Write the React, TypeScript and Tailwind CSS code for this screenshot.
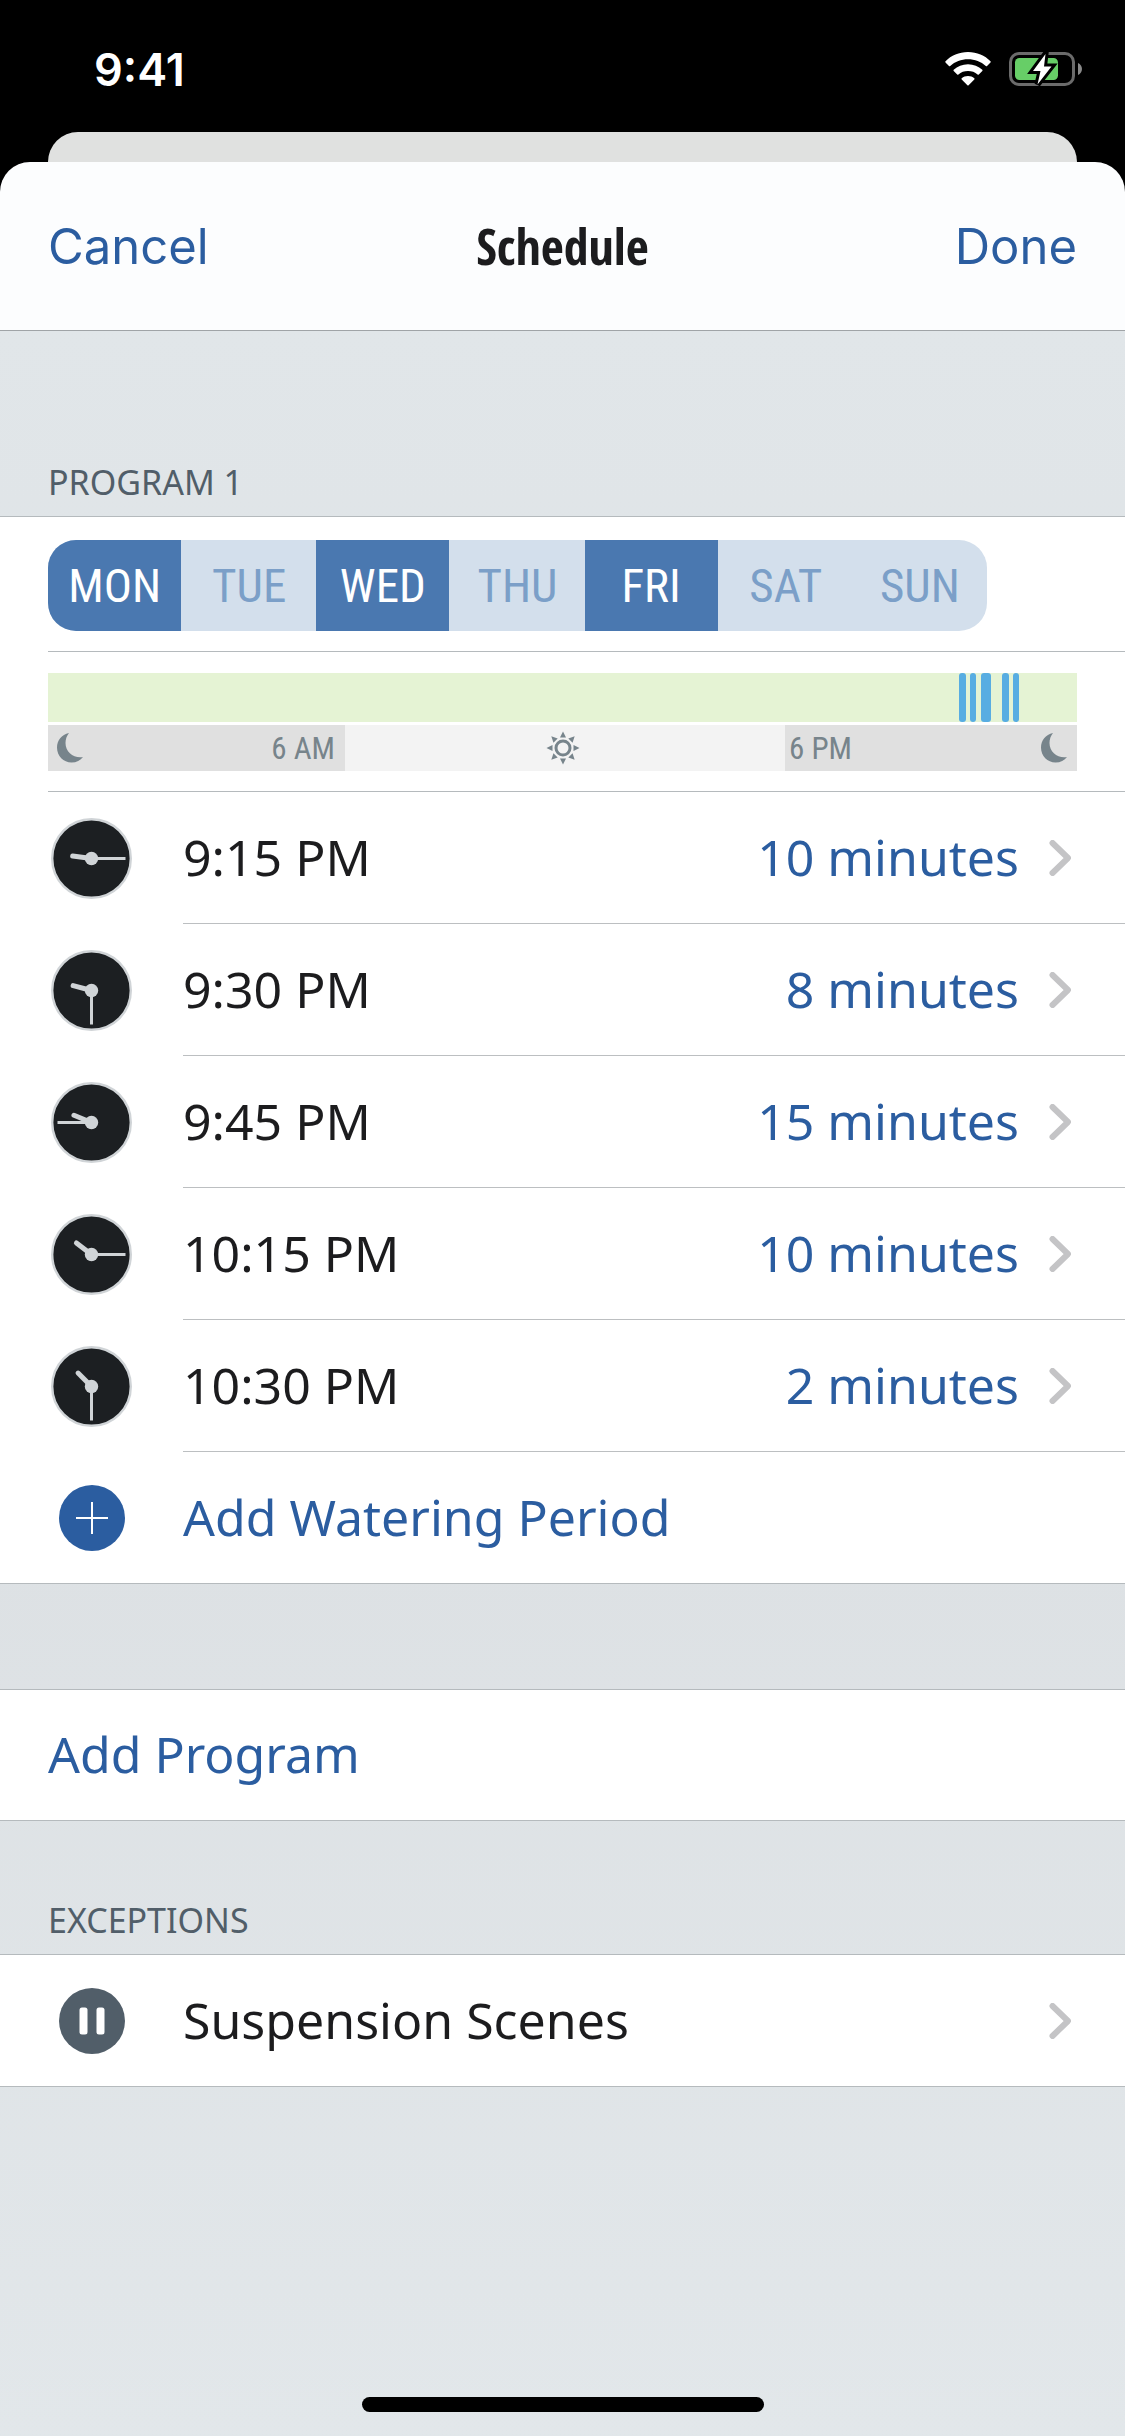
import type { ReactNode } from "react";

const days = [
  { name: "MON", on: true },
  { name: "TUE", on: false },
  { name: "WED", on: true },
  { name: "THU", on: false },
  { name: "FRI", on: true },
  { name: "SAT", on: false },
  { name: "SUN", on: false },
];

const periods = [
  { hour: 21, minute: 15, duration: 10 },
  { hour: 21, minute: 30, duration: 8 },
  { hour: 21, minute: 45, duration: 15 },
  { hour: 22, minute: 15, duration: 10 },
  { hour: 22, minute: 30, duration: 2 },
];

const DAY_MINUTES = 24 * 60;

function WifiIcon() {
  return (
    <svg className="h-[35px] w-[46px]" viewBox="0 0 46 35" fill="#fff" aria-hidden="true">
      <path d="M23 0C32 0 39.800 3.500 45.500 9.200Q46 9.800 45.500 10.400L42 13.900Q41.400 14.400 40.800 13.900C36 9.500 29.800 7.200 23 7.200S10 9.500 5.200 13.900Q4.600 14.400 4 13.900L.5 10.400Q0 9.800.5 9.200C6.200 3.500 14 0 23 0Z" />
      <path d="M23 12.200C28.600 12.200 33.500 14.300 37.300 17.700Q37.900 18.300 37.300 18.900L33.800 22.400Q33.200 22.900 32.600 22.400C30 20.200 26.700 19 23 19S16 20.200 13.400 22.400Q12.800 22.900 12.200 22.400L8.700 18.900Q8.100 18.300 8.700 17.700C12.500 14.300 17.400 12.200 23 12.200Z" />
      <path d="M23 24C25.500 24 27.600 24.900 29.300 26.300Q29.900 26.900 29.300 27.500L23.600 33.200Q23 33.800 22.400 33.200L16.700 27.500Q16.100 26.900 16.700 26.300C18.400 24.900 20.500 24 23 24Z" />
    </svg>
  );
}

function BatteryIcon() {
  return (
    <svg className="h-[36px] w-[74px]" viewBox="0 0 74 36" aria-hidden="true">
      <rect x="1.500" y="2.500" width="63" height="31" rx="8.500" fill="none" stroke="#6b6b6b" strokeWidth="3" />
      <path d="M69 12C71.500 13 73 15.500 73 18S71.500 23 69 24Z" fill="#8a8a8a" />
      <rect x="6" y="7" width="43" height="22" rx="4.500" fill="#67ce67" />
      <path d="M36.500 3 24 20H31.500L28.500 33.500 42.500 15.500H35Z" fill="#fff" stroke="#000" strokeWidth="6" />
      <path d="M36.500 3 24 20H31.500L28.500 33.500 42.500 15.500H35Z" fill="#fff" />
    </svg>
  );
}

function MoonIcon() {
  return (
    <svg className="h-[30px] w-[26px]" viewBox="0 0 26 30" fill="#77848b" aria-hidden="true">
      <path d="M12 0C4.500 1.800 0 7.500 0 14.500C0 23 6.500 29.500 14.500 29.500C19.500 29.500 23.500 27.500 26 24C17 25.500 8.500 19.500 8.500 10C8.500 6 9.800 2.800 12 0Z" />
    </svg>
  );
}

function SunIcon() {
  return (
    <svg className="h-[34px] w-[34px]" viewBox="-17 -17 34 34" fill="#77848b" aria-hidden="true">
      <circle r="7" fill="none" stroke="#77848b" strokeWidth="3" />
      {[0, 45, 90, 135, 180, 225, 270, 315].map((angle) => (
        <path key={angle} d="M-3-10.500H3L0-16.500Z" transform={`rotate(${angle})`} />
      ))}
    </svg>
  );
}

function ClockIcon({ hour, minute }: { hour: number; minute: number }) {
  return (
    <svg className="h-[81px] w-[81px]" viewBox="-40.500 -40.500 81 81" aria-hidden="true">
      <circle r="39.300" fill="#1c1f22" stroke="#d0d4d7" strokeWidth="2.400" />
      <g stroke="#d0d4d7">
        <path d="M0 0V-19" strokeWidth="5" strokeLinecap="round" transform={`rotate(${(hour % 12) * 30 + minute / 2})`} />
        <path d="M0 0V-34" strokeWidth="3" transform={`rotate(${minute * 6})`} />
      </g>
      <circle r="6.700" fill="#d0d4d7" />
    </svg>
  );
}

function PlusIcon() {
  return (
    <svg className="h-[66px] w-[66px]" viewBox="0 0 66 66" aria-hidden="true">
      <circle cx="33" cy="33" r="33" fill="#2b5da0" />
      <path d="M33 17V49M17 33H49" stroke="#fff" strokeWidth="2" />
    </svg>
  );
}

function PauseIcon() {
  return (
    <svg className="h-[66px] w-[66px]" viewBox="0 0 66 66" aria-hidden="true">
      <circle cx="33" cy="33" r="33" fill="#515e69" />
      <rect x="20.500" y="19.500" width="8" height="27" rx="2.500" fill="#fff" />
      <rect x="37.500" y="19.500" width="8" height="27" rx="2.500" fill="#fff" />
    </svg>
  );
}

function Chevron() {
  return (
    <svg className="h-[36px] w-[22px]" viewBox="0 0 22 36" fill="none" aria-hidden="true">
      <path d="M3.500 3 19 18 3.500 33" stroke="#c4c4c6" strokeWidth="6" strokeLinecap="round" strokeLinejoin="round" />
    </svg>
  );
}

function Row({ icon, divider, children }: { icon: ReactNode; divider?: boolean; children: ReactNode }) {
  return (
    <button type="button" className={`flex w-full items-stretch text-left ${divider ? "h-[132px]" : "h-[131px]"}`}>
      <span className="flex w-[183px] shrink-0 items-center pl-12">
        <span className="flex w-[87px] justify-center">{icon}</span>
      </span>
      <span className={`flex flex-1 items-center pr-[54px] ${divider ? "border-b border-[#bcbfc1]" : ""}`}>{children}</span>
    </button>
  );
}

export default function App() {
  return (
    <div className="flex min-h-screen flex-col bg-black font-['Noto_Sans',sans-serif] text-[50px] leading-none text-[#1c1c1e]">
      <div className="flex h-[132px] items-center justify-between pt-1.5 pr-[42px] pl-[94px]">
        <span className="font-['Inter',sans-serif] text-[45px] font-semibold text-white">9:41</span>
        <span className="flex items-center gap-[18px]">
          <WifiIcon />
          <BatteryIcon />
        </span>
      </div>

      <div className="mx-12 h-[30px] rounded-t-[30px] bg-[#e0e1e0]" />

      <div className="flex flex-1 flex-col bg-[linear-gradient(to_right,#000_0_48px,#e0e1e0_48px_calc(100%-48px),#000_calc(100%-48px))] bg-[length:100%_40px] bg-no-repeat">
        <header className="grid h-[169px] grid-cols-3 items-center rounded-t-[30px] border-b border-[#a0a4a7] bg-[#fcfdfe] px-12 font-['Inter',sans-serif] text-[49px]">
          <button type="button" className="justify-self-start text-[#2b5da0]">Cancel</button>
          <h1 className="justify-self-center font-['Open_Sans_Condensed',Roboto,sans-serif] text-[50px] font-bold">Schedule</h1>
          <button type="button" className="justify-self-end text-[#2b5da0]">Done</button>
        </header>

        <main className="flex flex-1 flex-col bg-linear-to-b from-[#e1e6e9] via-[#dce0e3] to-[#e2e7ea]">
          <h2 className="flex h-[185px] items-end px-12 pb-[17px] text-[34px] text-[#515e69]">PROGRAM 1</h2>

          <section className="border-y border-[#b5babd] bg-white">
            <div className="pl-12">
              <div className="h-[135px] border-b border-[#b5babd] pt-[23px]">
                <div className="grid h-[91px] w-[939px] max-w-full grid-cols-7 overflow-hidden rounded-[28px] bg-[#d3dfec] font-['Roboto_Condensed',Roboto,sans-serif] text-[47px]">
                  {days.map((day) => (
                    <button
                      key={day.name}
                      type="button"
                      aria-pressed={day.on}
                      className={day.on ? "mr-px bg-[#4a78b0] text-white" : "text-[#7b9fc8]"}
                    >
                      {day.name}
                    </button>
                  ))}
                </div>
              </div>
              <div className="h-[140px] border-b border-[#b5babd] pt-[21px] pr-12">
                <div className="relative h-[49px] bg-[#e5f3d4]">
                  {periods.map((p) => (
                    <span
                      key={`${p.hour}:${p.minute}`}
                      className="absolute inset-y-0 min-w-[6px] rounded-[3px] bg-[#58ade2]"
                      style={{
                        left: `${((p.hour * 60 + p.minute) / DAY_MINUTES) * 100}%`,
                        width: `${(p.duration / DAY_MINUTES) * 100}%`,
                      }}
                    />
                  ))}
                </div>
                <div className="mt-[3px] grid h-[46px] grid-cols-[297fr_440fr_292fr] font-['Roboto_Condensed',Roboto,sans-serif] text-[31px] text-[#77848b]">
                  <div className="flex items-center justify-between bg-[#e0e0e0] pr-[10px] pl-[9px]">
                    <MoonIcon />
                    <span>6 AM</span>
                  </div>
                  <div className="flex items-center justify-center bg-[#f3f3f3] pr-1">
                    <SunIcon />
                  </div>
                  <div className="flex items-center justify-between bg-[#e0e0e0] pr-[10px] pl-1">
                    <span>6 PM</span>
                    <MoonIcon />
                  </div>
                </div>
              </div>
            </div>

            {periods.map((p) => (
              <Row key={`${p.hour}:${p.minute}`} divider icon={<ClockIcon hour={p.hour} minute={p.minute} />}>
                <span className="flex-1 pb-0.5">
                  {p.hour % 12}:{p.minute} PM
                </span>
                <span className="mr-[30px] pb-0.5 text-[#2b5da0]">{p.duration} minutes</span>
                <Chevron />
              </Row>
            ))}
            <Row icon={<PlusIcon />}>
              <span className="pb-0.5 text-[#2b5da0]">Add Watering Period</span>
            </Row>
          </section>

          <section className="mt-[105px] border-y border-[#b5babd] bg-white">
            <button type="button" className="flex h-[130px] w-full items-center px-12 pb-0.5 text-[#2b5da0]">Add Program</button>
          </section>

          <h2 className="flex h-[133px] items-end px-12 pb-[17px] text-[34px] text-[#515e69]">EXCEPTIONS</h2>
          <section className="border-y border-[#b5babd] bg-white">
            <Row icon={<PauseIcon />}>
              <span className="flex-1 pb-0.5">Suspension Scenes</span>
              <Chevron />
            </Row>
          </section>

          <div className="mx-auto mt-auto mb-6 h-[15px] w-[402px] rounded-full bg-black" />
        </main>
      </div>
    </div>
  );
}
